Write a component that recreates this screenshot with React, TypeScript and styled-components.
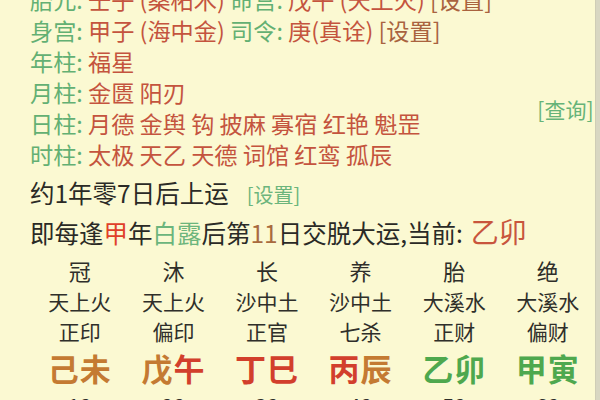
import React from 'react'
import styled, { createGlobalStyle } from 'styled-components'

const GlobalStyle = createGlobalStyle`
  html, body {
    margin: 0;
    padding: 0;
    background: #fbf9d2;
  }
  body {
    font-family: "Noto Sans CJK SC", "Noto Sans", sans-serif;
  }
`

const Page = styled.div`
  display: flex;
  width: 600px;
  height: 400px;
  overflow: hidden;
  background: #fbf9d2;
`

const Main = styled.div`
  position: relative;
  flex: 1;
  padding-left: 30px;
`

const Strip = styled.div`
  width: 6px;
  background: #d8d7c2;
  border-left: 1px solid #cfcdb6;
`

const Content = styled.div`
  margin-top: -16px;
`

const InfoLine = styled.div`
  height: 31px;
  line-height: 31px;
  font-size: 23.2px;
  white-space: nowrap;
`

const Label = styled.span`
  color: #63b073;
`

const Value = styled.span`
  color: #c4543e;
`

const SetLink = styled.span<{ $green?: boolean }>`
  color: ${p => (p.$green ? '#6cb57c' : '#a9633f')};
  font-size: ${p => (p.$green ? '20px' : '23.2px')};
  margin-left: ${p => (p.$green ? '18px' : '0')};
`

const QueryLink = styled.span`
  position: absolute;
  right: 1px;
  top: 94px;
  font-size: 21px;
  color: #66b378;
`

const Sentence = styled.div<{ $top?: number }>`
  height: 38px;
  line-height: 38px;
  margin-top: ${p => p.$top ?? 0}px;
  font-size: 24.5px;
  color: #2a2a26;
  white-space: nowrap;
`

const Mark = styled.span<{ $color: string }>`
  color: ${p => p.$color};
`

const Current = styled.span`
  color: #c8553d;
  font-size: 28px;
  margin-left: 8px;
`

const Grid = styled.div`
  display: grid;
  grid-template-columns: repeat(6, 93.6px);
  grid-template-rows: 34px 28px 32px 40px 36px;
  margin-top: 3px;
  margin-left: 3px;
`

const Cell = styled.div<{ $size: number }>`
  display: flex;
  align-items: center;
  justify-content: center;
  font-size: ${p => p.$size}px;
  color: #2f2f2a;
  white-space: nowrap;
`

const GanZhi = styled.div`
  display: flex;
  align-items: center;
  justify-content: center;
  font-size: 31px;
  font-weight: 700;
  letter-spacing: 1px;
`

const infoRows: { label: string; parts: [string, string][]; set?: boolean }[] = [
  { label: '胎元: ', parts: [['v', '壬子 (桑柘木) '], ['l', '命宫: '], ['v', '戊午 (天上火) ']], set: true },
  { label: '身宫: ', parts: [['v', '甲子 (海中金) '], ['l', '司令: '], ['v', '庚(真诠) ']], set: true },
  { label: '年柱: ', parts: [['v', '福星']] },
  { label: '月柱: ', parts: [['v', '金匮 阳刃']] },
  { label: '日柱: ', parts: [['v', '月德 金舆 钩 披麻 寡宿 红艳 魁罡']] },
  { label: '时柱: ', parts: [['v', '太极 天乙 天德 词馆 红鸾 孤辰']] },
]

const EARTH = '#c47a32'
const FIRE = '#d23f2c'
const WOOD = '#4ea84e'

const columns = [
  { stage: '冠', nayin: '天上火', god: '正印', gz: [['己', EARTH], ['未', EARTH]], age: '12' },
  { stage: '沐', nayin: '天上火', god: '偏印', gz: [['戊', EARTH], ['午', FIRE]], age: '22' },
  { stage: '长', nayin: '沙中土', god: '正官', gz: [['丁', FIRE], ['巳', FIRE]], age: '32' },
  { stage: '养', nayin: '沙中土', god: '七杀', gz: [['丙', FIRE], ['辰', EARTH]], age: '42' },
  { stage: '胎', nayin: '大溪水', god: '正财', gz: [['乙', WOOD], ['卯', WOOD]], age: '52' },
  { stage: '绝', nayin: '大溪水', god: '偏财', gz: [['甲', WOOD], ['寅', WOOD]], age: '62' },
]

export default function App() {
  return (
    <Page>
      <GlobalStyle />
      <Main>
        <Content>
          {infoRows.map(row => (
            <InfoLine key={row.label}>
              <Label>{row.label}</Label>
              {row.parts.map(([kind, text], i) =>
                kind === 'l' ? <Label key={i}>{text}</Label> : <Value key={i}>{text}</Value>
              )}
              {row.set && <SetLink>[设置]</SetLink>}
            </InfoLine>
          ))}
          <Sentence $top={4}>
            约1年零7日后上运<SetLink $green>[设置]</SetLink>
          </Sentence>
          <Sentence>
            即每逢<Mark $color="#e0402a">甲</Mark>年<Mark $color="#6cb57c">白露</Mark>后第
            <Mark $color="#a86a3e">11</Mark>日交脱大运,当前:<Current>乙卯</Current>
          </Sentence>
          <Grid>
            {columns.map(c => <Cell key={'s' + c.stage} $size={22}>{c.stage}</Cell>)}
            {columns.map(c => <Cell key={'n' + c.stage} $size={21}>{c.nayin}</Cell>)}
            {columns.map(c => <Cell key={'g' + c.stage} $size={21}>{c.god}</Cell>)}
            {columns.map(c => (
              <GanZhi key={'z' + c.stage}>
                {c.gz.map(([ch, color]) => (
                  <Mark key={ch} $color={color}>{ch}</Mark>
                ))}
              </GanZhi>
            ))}
            {columns.map(c => <Cell key={'a' + c.stage} $size={22}>{c.age}</Cell>)}
          </Grid>
        </Content>
        <QueryLink>[查询]</QueryLink>
      </Main>
      <Strip />
    </Page>
  )
}
